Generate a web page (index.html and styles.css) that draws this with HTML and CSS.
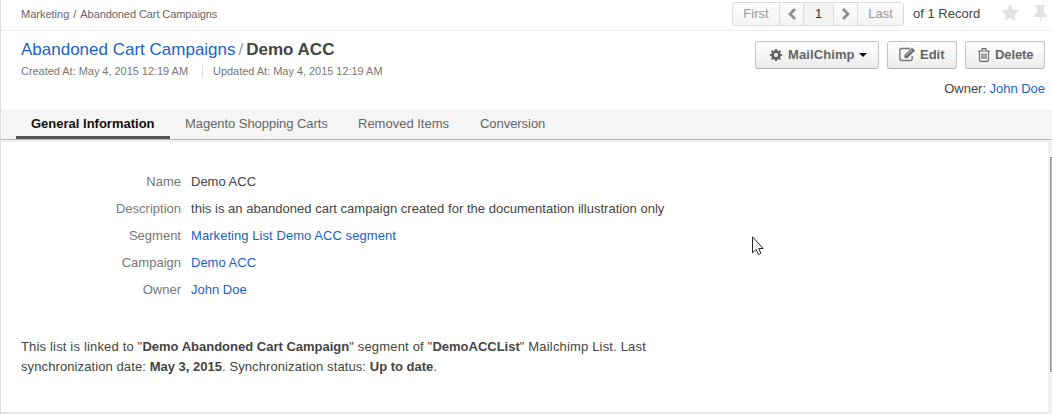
FILE: index.html
```html
<!DOCTYPE html>
<html lang="en">
<head>
<meta charset="utf-8">
<title>Demo ACC - Abandoned Cart Campaigns</title>
<link rel="stylesheet" href="styles.css">
</head>
<body>
<div class="page">
  <div class="topbar">
    <div class="breadcrumb">Marketing<span class="sep">/</span><span class="crumb">Abandoned Cart Campaigns</span></div>
    <div class="pager">
      <span class="cell first">First</span>
      <span class="cell arrow"><svg width="10" height="12" viewBox="0 0 10 12"><path d="M8 1 3 6l5 5" /></svg></span>
      <span class="cell current">1</span>
      <span class="cell arrow"><svg width="10" height="12" viewBox="0 0 10 12"><path d="M2 1l5 5-5 5" /></svg></span>
      <span class="cell last">Last</span>
    </div>
    <div class="records">of 1 Record</div>
    <svg class="star" width="18" height="17" viewBox="0 0 18 17"><path d="M9 0l2.7 5.6 6.3.8-4.6 4.3 1.2 6.3L9 13.900 3.400 17l1.200-6.300L0 6.400l6.300-.8z"/></svg>
    <svg class="pin" width="14" height="18" viewBox="0 0 14 18"><path d="M2 0h9v2h-1v6q3 1 3 4H7.500L7 18H6.500L6 12H0q0-3 3-4V2H2z"/></svg>
  </div>
  <header class="header">
    <div class="heading">
      <h1 class="title"><a>Abandoned Cart Campaigns</a><span class="slash">/</span><b>Demo ACC</b></h1>
      <div class="dates"><span>Created At: May 4, 2015 12:19 AM</span><span class="updated">Updated At: May 4, 2015 12:19 AM</span></div>
    </div>
    <div class="side">
      <div class="actions">
        <div class="btn mail"><svg width="12" height="12" viewBox="0 0 12 12"><path fill="#666" fill-rule="evenodd" d="M5 0h2l.3 1.600 1 .4L9.700 1.100l1.300 1.300L10.100 3.700l.4 1L12 5v2l-1.500.3-.4 1 .9 1.300L9.600 11l-1.300-.9-1 .4L7 12H5l-.3-1.500-1-.4-1.300.9L1 9.600l.9-1.300-.4-1L0 7V5l1.500-.3.4-1L1 2.400 2.400 1l1.300.9 1-.4zM6 4a2 2 0 1 0 0 4 2 2 0 0 0 0-4z"/></svg><span>MailChimp</span><i class="caret"></i></div>
        <div class="btn edit"><svg width="17" height="15" viewBox="0 0 17 15"><path d="M11 1.500H3Q.8 1.500.8 3.700v7.600q0 2.200 2.200 2.200h8q2.200 0 2.200-2.200V9" fill="none" stroke="#777" stroke-width="1.400"/><path d="M5.500 11V8L13 .8 16 3.500 8.500 11z" fill="#666"/><path d="M7 8.700 13 3" stroke="#eee" stroke-width=".8"/></svg><span>Edit</span></div>
        <div class="btn delete"><svg width="12" height="14" viewBox="0 0 12 14"><path d="M0 3h12M3.500 3l.7-2.300h3.600L8.500 3M1.500 3v9q0 1.300 1.300 1.300h6.400q1.300 0 1.300-1.300V3M4 5.500V11M6 5.500V11M8 5.500V11" fill="none" stroke="#6c6c6c" stroke-width="1.200"/></svg><span>Delete</span></div>
      </div>
      <div class="owner">Owner: <a>John Doe</a></div>
    </div>
  </header>
  <nav class="tabs">
    <div class="tab active">General Information</div>
    <div class="tab t-carts">Magento Shopping Carts</div>
    <div class="tab t-removed">Removed Items</div>
    <div class="tab t-conv">Conversion</div>
  </nav>
  <main class="body">
    <div class="content">
      <dl class="fields">
        <dt>Name</dt><dd>Demo ACC</dd>
        <dt>Description</dt><dd class="spaced">this is an abandoned cart campaign created for the documentation illustration only</dd>
        <dt>Segment</dt><dd class="list"><a>Marketing List Demo ACC segment</a></dd>
        <dt>Campaign</dt><dd><a>Demo ACC</a></dd>
        <dt>Owner</dt><dd><a>John Doe</a></dd>
      </dl>
      <p class="note"><span class="linked">This list is linked to "<b>Demo Abandoned Cart Campaign</b>" segment of "<b>DemoACCList</b>" Mailchimp List. Last</span><br><span class="sync">synchronization date: <b>May 3, 2015</b>. Synchronization status: <b>Up to date</b>.</span></p>
    </div>
    <div class="scrollbar"><div class="thumb"></div></div>
  </main>
  <svg class="cursor" width="13" height="20" viewBox="0 0 13 20"><path d="M1.500.8v16l3.500-3.500 2.400 5q1.500.5 2.400-1.100L7.700 12.500h4.500z" fill="#fff" stroke="#223"/></svg>
</div>
</body>
</html>
```
FILE: styles.css
```css
* { box-sizing: border-box; }
body { margin: 0; background: #fff; color: #444; font: 13px/20px "Liberation Sans", Arial, sans-serif; }
a { color: #1a62c8; }
svg { display: block; flex: none; }
.page { position: relative; display: flex; flex-direction: column; width: 1052px; height: 414px; border-left: 1px solid #ddd; overflow: hidden; white-space: nowrap; }

.topbar { display: flex; align-items: flex-start; height: 31px; padding-left: 20px; border-bottom: 1px solid #eee; }
.breadcrumb { flex: 1; padding-top: 4px; font-size: 11px; color: #666; }
.sep { margin: 0 4px; }
.crumb { letter-spacing: -.08px; }
.pager { display: flex; width: 172px; height: 24px; margin-top: 2px; border: 1px solid #ddd; border-radius: 3px; background: linear-gradient(#fdfdfd, #f4f4f4); color: #999; line-height: 20px; }
.cell { display: flex; align-items: center; justify-content: center; padding-bottom: 1px; border-left: 1px solid #ddd; }
.first { width: 46px; border-left: 0; }
.arrow { width: 24px; }
.arrow path { fill: none; stroke: #8c8c8c; stroke-width: 2.7; }
.current { width: 30px; background: #f4f4f4; color: #333; }
.last { flex: 1; }
.records { width: 88px; padding: 4px 0 0 9px; }
.star { margin: 4px 0 0 9px; fill: #e3e3e3; }
.pin { margin: 5px 4px 0 15px; fill: #e3e3e3; }

.header { display: flex; justify-content: space-between; height: 78px; padding: 8px 7px 0 20px; }
.title { margin: 0; padding-top: 1px; font-size: 17px; line-height: 20px; font-weight: normal; }
.slash { margin: 0 3px; color: #999; }
.dates { display: flex; align-items: center; margin-top: 4px; font-size: 11px; line-height: 14px; letter-spacing: -.035px; color: #777; }
.updated { margin-left: 14px; padding-left: 10px; border-left: 1px solid #ddd; }
.side { padding-top: 2px; }
.actions { display: flex; gap: 8px; }
.btn { display: flex; align-items: center; height: 28px; padding-bottom: 1px; border: 1px solid #c4c4c4; border-bottom-color: #b4b4b4; border-radius: 3px; background: linear-gradient(#fff, #ececec); color: #666; font-weight: bold; }
.mail { width: 124px; padding-left: 14px; }
.mail span { margin-left: 6px; letter-spacing: .1px; }
.caret { margin-left: 4px; border: 4px solid transparent; border-top-color: #000; border-bottom: 0; }
.edit { width: 70px; padding-left: 11px; }
.edit span { margin-left: 4px; }
.delete { width: 80px; padding-left: 12px; }
.delete span { margin-left: 5px; letter-spacing: -.1px; }
.owner { margin-top: 10px; text-align: right; letter-spacing: -.03px; }

.tabs { display: flex; height: 31px; padding-left: 15px; border-bottom: 1px solid #b7b7b7; background: #f5f5f5; color: #666; line-height: 30px; }
.tab { padding-left: 15px; }
.active { width: 154px; border-bottom: 3px solid #555; color: #111; font-weight: bold; }
.t-carts { width: 173px; letter-spacing: -.05px; }
.t-removed { width: 122px; }
.t-conv { letter-spacing: -.05px; }

.body { display: flex; flex: 1; background: #f0f0f0; }
.content { flex: 1; height: 273px; padding: 28px 0 0 20px; border-top: 2px solid #f3f3f3; border-bottom: 1px solid #e2e2e2; background: #fff; }
.fields { display: grid; grid-template-columns: 160px 1fr; grid-auto-rows: 27px; column-gap: 10px; margin: 0; line-height: 24px; }
.fields dt { text-align: right; color: #777; }
.fields dd { margin: 0; }
.fields .spaced { letter-spacing: .027px; }
.fields .list { letter-spacing: .06px; }
.note { margin: 32px 0 0; }
.note b { letter-spacing: 0; }
.linked { letter-spacing: .17px; }
.sync { letter-spacing: .1px; }
.scrollbar { width: 4px; padding: 17px 0 0 2px; }
.thumb { height: 215px; border: 1px solid #999; border-right: 0; background: #bbb; }
.cursor { position: absolute; left: 750px; top: 236px; }
```
